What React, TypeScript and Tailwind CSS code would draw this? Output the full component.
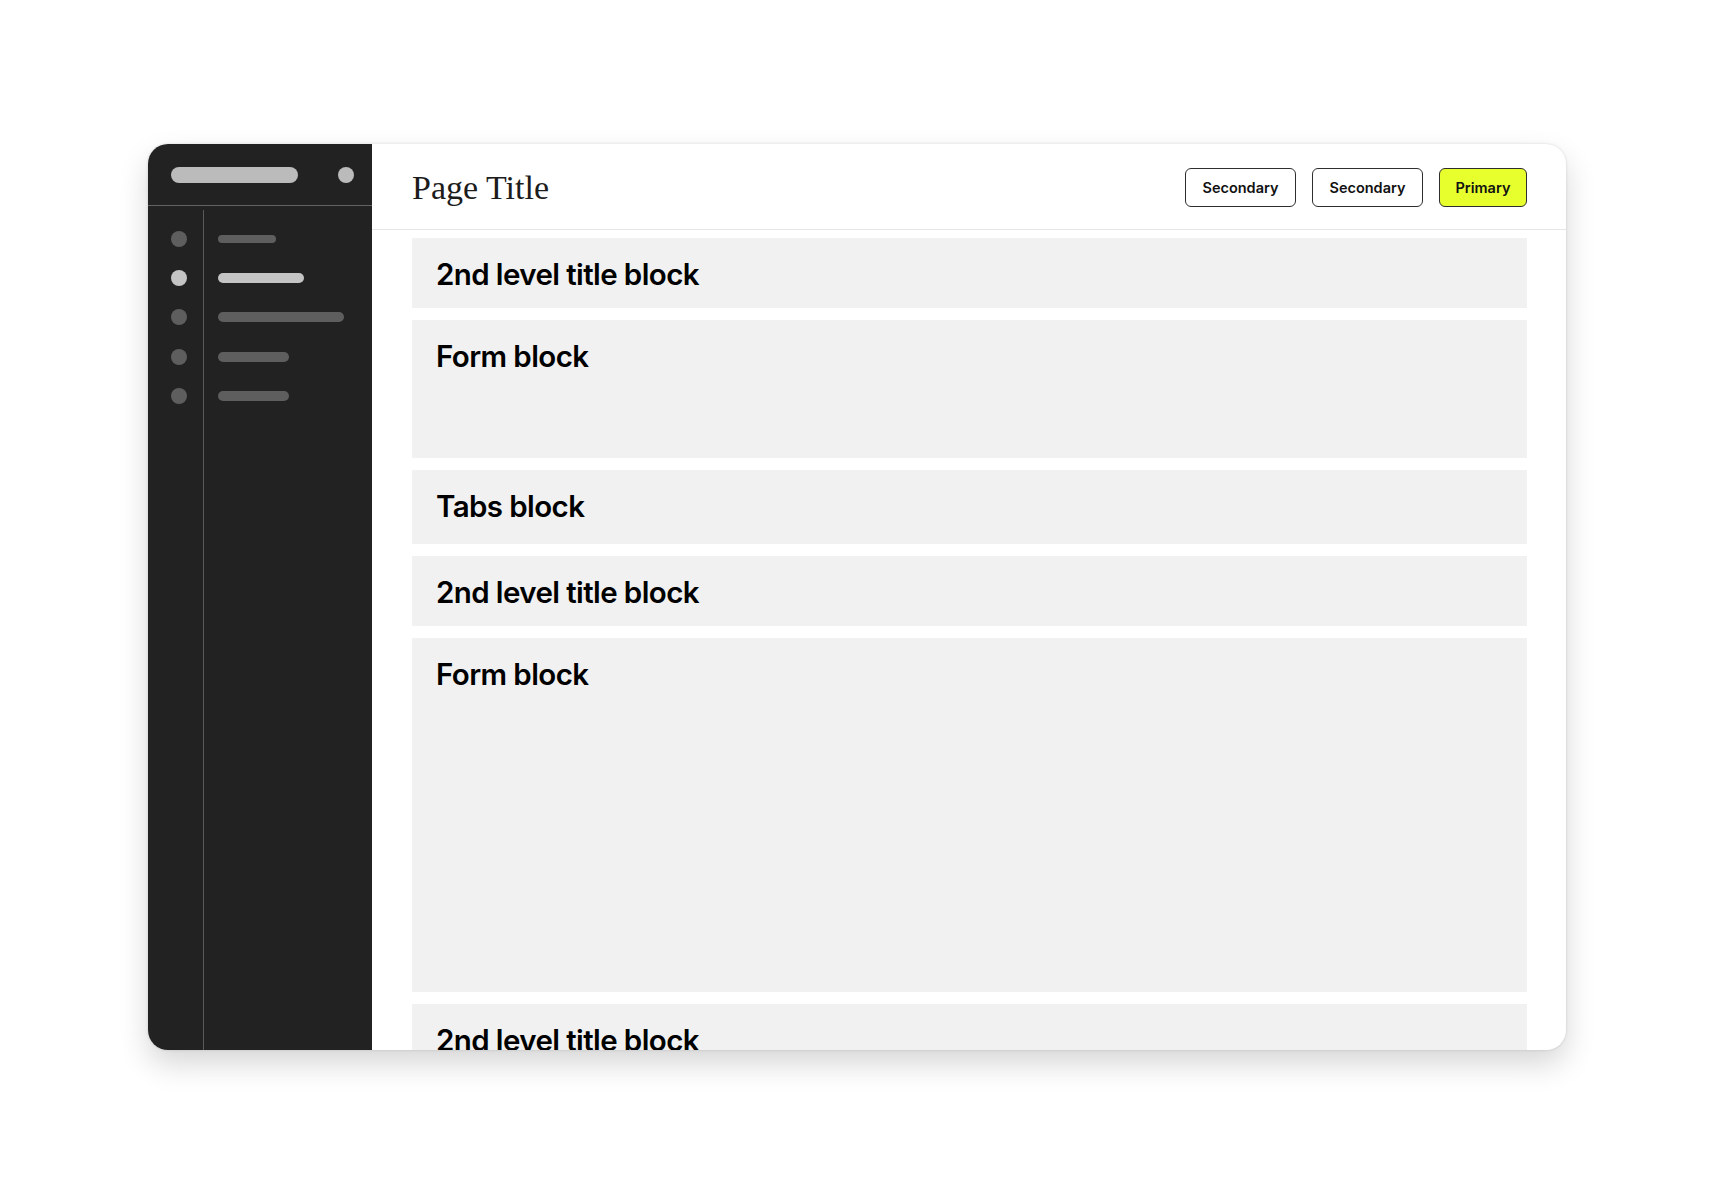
import React from "react";

const navBars = [
  { w: "w-[58px]", h: "h-[8px]", active: false },
  { w: "w-[86px]", h: "h-[10px]", active: true },
  { w: "w-[126px]", h: "h-[10px]", active: false },
  { w: "w-[71px]", h: "h-[10px]", active: false },
  { w: "w-[71px]", h: "h-[10px]", active: false },
];

function Block({ title, h }: { title: string; h: string }) {
  return (
    <div className={`${h} shrink-0 bg-[#f1f1f1] px-[24px] pt-[18px]`}>
      <div className="text-[29.5px] leading-[36px] font-semibold tracking-[-0.6px] text-black" style={{ fontFamily: "Inter, 'Liberation Sans', sans-serif" }}>
        {title}
      </div>
    </div>
  );
}

export default function App() {
  return (
    <div className="w-[1712px] h-[1194px] bg-white pl-[148px] pt-[144px]">
      <div className="w-[1418px] h-[906px] rounded-[20px] overflow-hidden flex bg-white shadow-[0_0_3px_rgba(0,0,0,0.14),0_14px_30px_rgba(0,0,0,0.16)]">
        {/* Sidebar */}
        <div className="w-[224px] shrink-0 bg-[#222222] flex flex-col">
          <div className="h-[62px] shrink-0 border-b border-[#626262] flex items-center justify-between pl-[23px] pr-[18px]">
            <div className="w-[127px] h-[16px] rounded-full bg-[#bbbbbb]" />
            <div className="w-[16px] h-[16px] rounded-full bg-[#bbbbbb]" />
          </div>
          <div className="flex flex-1 pt-[4px]">
            <div className="w-[56px] shrink-0 border-r border-[#5a5a5a] pl-[23px] pt-[9px] flex flex-col">
              {navBars.map((b, i) => (
                <div key={i} className="h-[39.33px] flex items-center">
                  <div className={`w-[16px] h-[16px] rounded-full ${b.active ? "bg-[#c4c4c4]" : "bg-[#5e5e5e]"}`} />
                </div>
              ))}
            </div>
            <div className="flex-1 pl-[14px] pt-[9px] flex flex-col">
              {navBars.map((b, i) => (
                <div key={i} className="h-[39.33px] flex items-center">
                  <div className={`${b.w} ${b.h} rounded-full ${b.active ? "bg-[#c4c4c4]" : "bg-[#5e5e5e]"}`} />
                </div>
              ))}
            </div>
          </div>
        </div>

        {/* Main */}
        <div className="flex-1 flex flex-col min-w-0">
          <div className="h-[86px] shrink-0 border-b border-[#e6e6e6] flex items-center justify-between pl-[40px] pr-[39px]">
            <div className="text-[34px] text-[#1c1c1c] leading-none pt-[2px]" style={{ fontFamily: "'Liberation Serif', 'DejaVu Serif', serif" }}>
              Page Title
            </div>
            <div className="flex items-center gap-[16px] pt-[2px]" style={{ fontFamily: "Inter, 'Liberation Sans', sans-serif" }}>
              <button className="h-[39px] w-[111px] rounded-[6px] border border-[#2e2e2e] bg-white text-[14.5px] font-semibold text-[#111]">
                Secondary
              </button>
              <button className="h-[39px] w-[111px] rounded-[6px] border border-[#2e2e2e] bg-white text-[14.5px] font-semibold text-[#111]">
                Secondary
              </button>
              <button className="h-[39px] w-[88px] rounded-[6px] border border-[#2e2e2e] bg-[#e8ff2e] text-[14.5px] font-semibold text-[#111]">
                Primary
              </button>
            </div>
          </div>
          <div className="flex-1 overflow-hidden pt-[8px] pl-[40px] pr-[39px] flex flex-col gap-[12px]">
            <Block title="2nd level title block" h="h-[70px]" />
            <Block title="Form block" h="h-[138px]" />
            <Block title="Tabs block" h="h-[74px]" />
            <Block title="2nd level title block" h="h-[70px]" />
            <Block title="Form block" h="h-[354px]" />
            <Block title="2nd level title block" h="h-[70px]" />
          </div>
        </div>
      </div>
    </div>
  );
}
